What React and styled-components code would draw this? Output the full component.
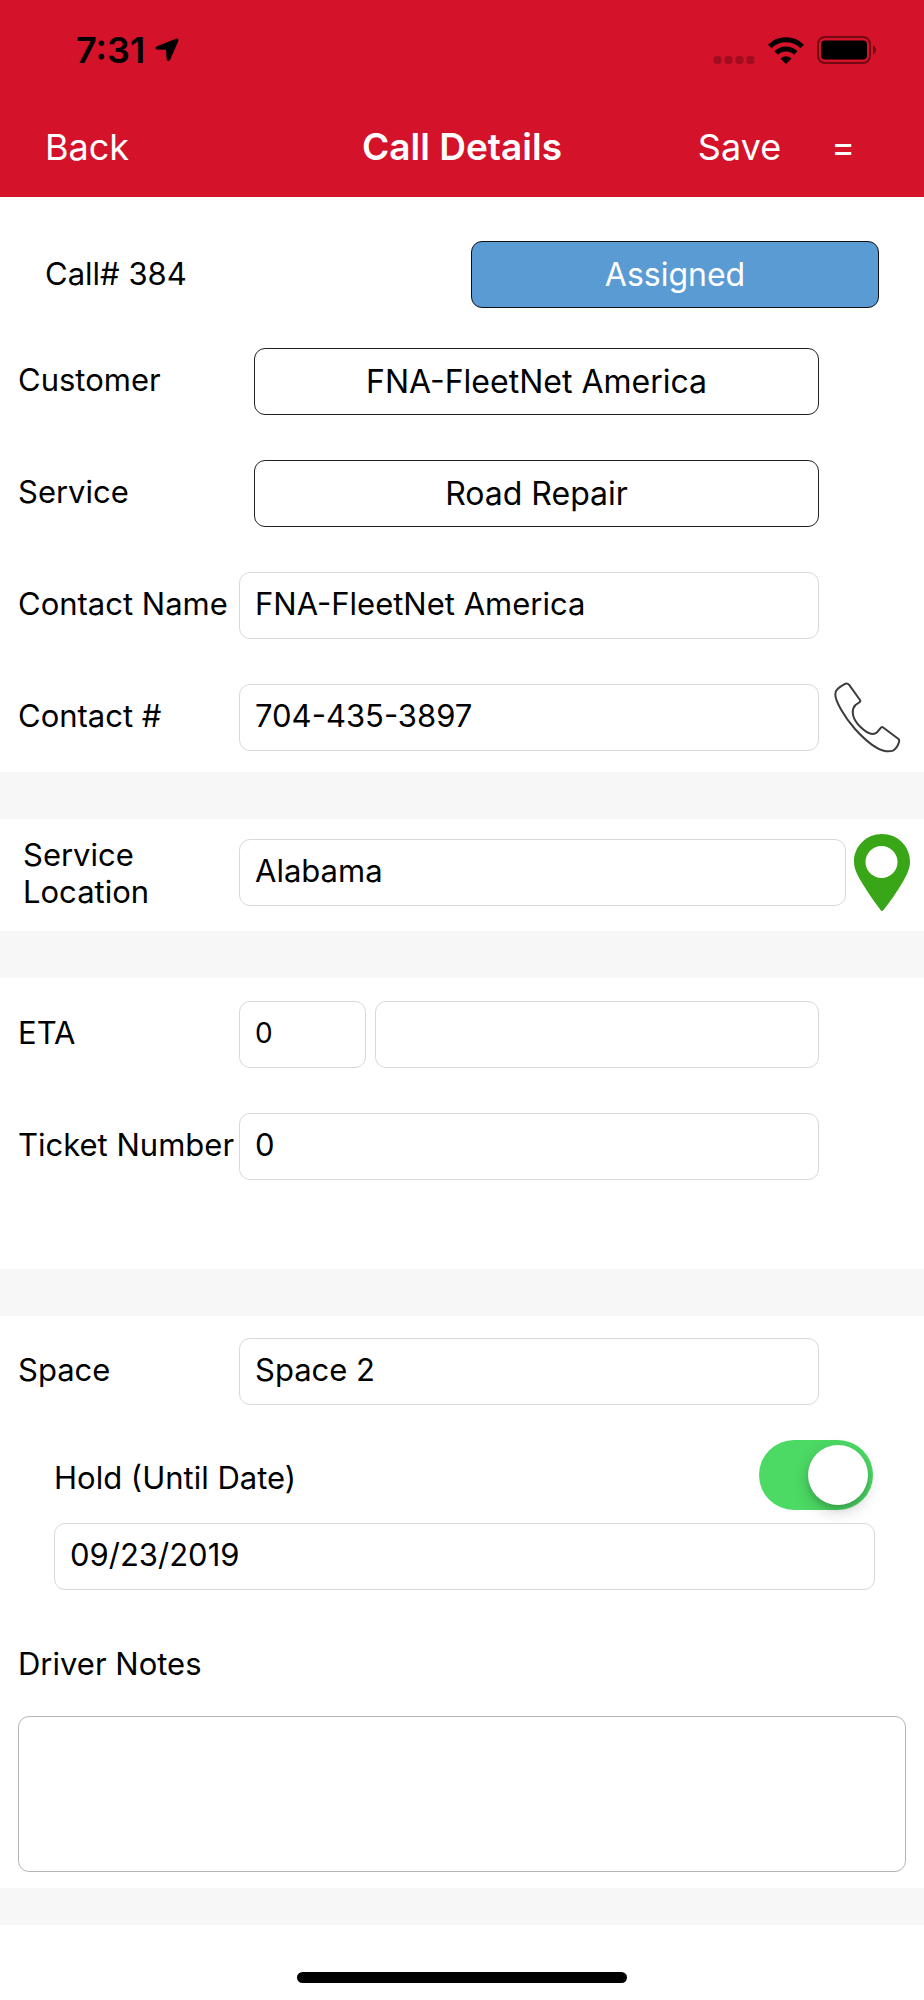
import React, { useState } from "react";
import styled, { createGlobalStyle } from "styled-components";

const GlobalStyle = createGlobalStyle`
  *, *::before, *::after { box-sizing: border-box; }
  body {
    margin: 0;
    background: #fff;
    color: #000;
    font-family: Inter, "Liberation Sans", sans-serif;
    font-size: 31px;
    line-height: 37px;
  }
  button, input, textarea { font: inherit; color: inherit; margin: 0; }
`;

const Screen = styled.div`
  min-height: 100vh;
  display: flex;
  flex-direction: column;
`;

const Header = styled.header`
  background: #d41229;
`;

const StatusBar = styled.div`
  display: flex;
  align-items: center;
  justify-content: space-between;
  height: 100px;
  padding: 0 47px 0 76px;
`;

const StatusGroup = styled.div`
  display: flex;
  align-items: center;
  gap: ${(p) => p.$gap}px;
`;

const Clock = styled.time`
  font-size: 36px;
  font-weight: 600;
`;

const NavBar = styled.nav`
  display: grid;
  grid-template-columns: 1fr auto 1fr;
  align-items: center;
  height: 97px;
  padding: 0 45px 4px;
  color: #fff;
`;

const Title = styled.h1`
  margin: 0;
  font-size: 37px;
  font-weight: 600;
  line-height: 44px;
`;

const NavActions = styled.div`
  display: flex;
  align-items: center;
  justify-content: flex-end;
  gap: 50px;
  padding-right: 24px;
`;

const NavButton = styled.button`
  justify-self: start;
  padding: 0;
  border: 0;
  background: none;
  font-size: 36px;
  line-height: 44px;
`;

const Section = styled.section`
  display: flex;
  flex-direction: column;
  gap: ${(p) => (p.$tight ? 35 : 45)}px;
  padding: ${(p) => p.$pad};
`;

const Band = styled.div`
  height: ${(p) => (p.$slim ? 37 : 47)}px;
  background: #f7f7f7;
`;

const Row = styled.div`
  display: grid;
  grid-template-columns: 221px 1fr ${(p) => (p.$wide ? 65 : 87)}px;
  grid-template-rows: 67px;
  align-items: center;
`;

const CallRow = styled.div`
  display: grid;
  grid-template-columns: 1fr 1fr;
  align-items: center;
  gap: 18px;
`;

const CallNumber = styled.h2`
  margin: 0;
  padding-bottom: 2px;
  font-size: 31px;
  font-weight: 400;
`;

const Label = styled.label`
  padding-bottom: 4px;
`;

const WrappedLabel = styled.label`
  max-width: 160px;
  padding-left: 5px;
`;

const HoldLabel = styled.label`
  padding-top: 4px;
`;

const PickerButton = styled.button`
  height: 67px;
  padding: 0 15px;
  border: 1px solid #222;
  border-radius: 11px;
  background: #fff;
  font-size: 32px;
`;

const FieldPicker = styled(PickerButton)`
  margin-left: 15px;
`;

const StatusButton = styled(PickerButton)`
  background: #5b9bd4;
  border-color: #111;
  color: #fff;
`;

const TextField = styled.input`
  width: 100%;
  min-width: 0;
  height: 67px;
  padding: 0 15px 4px;
  border: 1px solid #d9d9d9;
  border-radius: 11px;
  background: #fff;
  font-size: ${(p) => (p.$small ? 28 : 31)}px;
`;

const EtaFields = styled.div`
  display: grid;
  grid-template-columns: 127px 1fr;
  gap: 9px;
`;

const IconButton = styled.button`
  display: flex;
  justify-self: end;
  padding: 0 ${(p) => (p.$inset ? 5 : 0)}px 0 0;
  border: 0;
  background: none;
`;

const HoldGroup = styled.div`
  display: flex;
  flex-direction: column;
  gap: 13px;
  padding: 0 31px 0 36px;
`;

const HoldRow = styled.div`
  display: flex;
  align-items: center;
  justify-content: space-between;
  padding-right: 2px;
`;

const Switch = styled.input`
  appearance: none;
  display: flex;
  justify-content: ${(p) => (p.checked ? "flex-end" : "flex-start")};
  width: 114px;
  height: 70px;
  padding: 5px;
  border-radius: 35px;
  background: ${(p) => (p.checked ? "#4cd964" : "#e5e5ea")};

  &::before {
    content: "";
    width: 60px;
    height: 60px;
    border-radius: 50%;
    background: #fff;
    box-shadow: 0 6px 16px rgba(0, 0, 0, 0.2), 0 4px 4px rgba(0, 0, 0, 0.1);
  }
`;

const NotesGroup = styled.div`
  display: flex;
  flex-direction: column;
  gap: 30px;
  padding-top: 20px;
`;

const Notes = styled.textarea`
  display: block;
  width: 100%;
  height: 156px;
  padding: 15px;
  border: 1px solid #b5b5b5;
  border-radius: 11px;
  resize: none;
`;

const Footer = styled.footer`
  display: flex;
  justify-content: center;
  padding: 47px 0 18px;
`;

const HomeIndicator = styled.div`
  width: 330px;
  height: 11px;
  border-radius: 6px;
  background: #000;
`;

const LocationArrow = () => (
  <svg width="24" height="24" viewBox="0 0 24 24" aria-hidden="true">
    <path d="M21.5.5 1.5 8.500Q-.5 9.800 1.500 11.400L11 11.800 11.700 21.500Q13 24.300 15 22L23.400 2.700Q23.800.300 21.500.500Z" />
  </svg>
);

const SignalDots = () => (
  <svg width="42" height="28" viewBox="0 0 42 28" aria-hidden="true" fill="#000" fillOpacity=".24">
    {[0, 11, 22, 33].map((x) => (
      <rect key={x} x={x + 0.5} y="20" width="8" height="8" rx="3" />
    ))}
  </svg>
);

const Wifi = () => (
  <svg width="36" height="27" viewBox="0 0 36 27" aria-hidden="true">
    <g fill="none" stroke="#000" strokeWidth="5">
      <path d="M1.800 9.500A23 23 0 0 1 34.200 9.500" />
      <path d="M8.200 16A14 14 0 0 1 27.800 16" />
    </g>
    <path d="M12.500 21.500Q18 17 23.500 21.500L18.800 26.300Q18 27 17.200 26.300Z" />
  </svg>
);

const Battery = () => (
  <svg width="60" height="28" viewBox="0 0 60 28" aria-hidden="true">
    <rect x="1" y="1" width="52" height="26" rx="7" fill="none" stroke="#000" strokeOpacity=".45" strokeWidth="2" />
    <rect x="4" y="4.500" width="46" height="19" rx="4" />
    <path d="M56 9.500Q59 11 59 14T56 18.500Z" fillOpacity=".45" />
  </svg>
);

const Handset = () => (
  <svg width="67" height="71" viewBox="0 0 67 71" aria-hidden="true" fill="none" stroke="#3c3c3c" strokeWidth="2" strokeLinejoin="round">
    <path d="M3.500 7C6 4.500 9 3 11.500 1.600Q13.500 1 15 2.700L26 18Q26.800 19.300 25.500 20.200L21.500 23Q18.500 26 18.800 31C19 37 22 40.500 26 44.500C30 48.500 34 51.600 38 52Q42.500 52 44.500 48.500L47 45.600Q48 44.500 49.200 45.500L64.500 57Q65.600 58 65 60C64 64 61.500 67 59 68.600Q56.500 69.500 52 69.200C43 68 31 58 21 47C10 34.500 1.300 19 1.300 12.500Q1.400 9 3.500 7Z" />
  </svg>
);

const MapPin = () => (
  <svg width="58" height="79" viewBox="0 0 58 79" aria-hidden="true">
    <path
      fill="#38a616"
      fillRule="evenodd"
      d="M29 1C13.500 1 1 13 1 28.500C1 36 4.500 42 8.500 49C14 58.500 21 68 27.500 77Q29 79 30.500 77C37 69 44 58.500 49.500 49.500C53.500 42.500 57 36 57 28.500C57 13 44.500 1 29 1ZM28.500 13A16 16 0 1 1 28.500 45A16 16 0 1 1 28.500 13Z"
    />
  </svg>
);

export default function App() {
  const [hold, setHold] = useState(true);

  return (
    <>
      <GlobalStyle />
      <Screen>
        <Header>
          <StatusBar>
            <StatusGroup $gap={10}>
              <Clock>7:31</Clock>
              <LocationArrow />
            </StatusGroup>
            <StatusGroup $gap={13}>
              <SignalDots />
              <Wifi />
              <Battery />
            </StatusGroup>
          </StatusBar>
          <NavBar>
            <NavButton type="button">Back</NavButton>
            <Title>Call Details</Title>
            <NavActions>
              <NavButton type="button">Save</NavButton>
              <NavButton type="button" aria-label="Menu">=</NavButton>
            </NavActions>
          </NavBar>
        </Header>

        <main>
          <Section $pad="44px 45px 0">
            <CallRow>
              <CallNumber>Call# 384</CallNumber>
              <StatusButton type="button">Assigned</StatusButton>
            </CallRow>
          </Section>
          <Section $pad="40px 18px 21px">
            <Row>
              <Label htmlFor="customer">Customer</Label>
              <FieldPicker id="customer" type="button">FNA-FleetNet America</FieldPicker>
            </Row>
            <Row>
              <Label htmlFor="service">Service</Label>
              <FieldPicker id="service" type="button">Road Repair</FieldPicker>
            </Row>
            <Row>
              <Label htmlFor="contact-name">Contact Name</Label>
              <TextField id="contact-name" defaultValue="FNA-FleetNet America" />
            </Row>
            <Row>
              <Label htmlFor="contact-number">Contact #</Label>
              <TextField id="contact-number" type="tel" defaultValue="704-435-3897" />
              <IconButton type="button" $inset aria-label="Call contact">
                <Handset />
              </IconButton>
            </Row>
          </Section>

          <Band />
          <Section $pad="20px 13px 25px 18px">
            <Row $wide>
              <WrappedLabel htmlFor="location">Service Location</WrappedLabel>
              <TextField id="location" defaultValue="Alabama" />
              <IconButton type="button" aria-label="Show on map">
                <MapPin />
              </IconButton>
            </Row>
          </Section>

          <Band />
          <Section $pad="23px 18px 89px">
            <Row>
              <Label htmlFor="eta">ETA</Label>
              <EtaFields>
                <TextField id="eta" $small defaultValue="0" />
                <TextField aria-label="ETA time" />
              </EtaFields>
            </Row>
            <Row>
              <Label htmlFor="ticket">Ticket Number</Label>
              <TextField id="ticket" defaultValue="0" />
            </Row>
          </Section>

          <Band />
          <Section $tight $pad="22px 18px 16px">
            <Row>
              <Label htmlFor="space">Space</Label>
              <TextField id="space" defaultValue="Space 2" />
            </Row>
            <HoldGroup>
              <HoldRow>
                <HoldLabel htmlFor="hold">Hold (Until Date)</HoldLabel>
                <Switch
                  id="hold"
                  type="checkbox"
                  role="switch"
                  checked={hold}
                  onChange={(e) => setHold(e.target.checked)}
                />
              </HoldRow>
              <TextField aria-label="Hold until date" defaultValue="09/23/2019" />
            </HoldGroup>
            <NotesGroup>
              <Label htmlFor="notes">Driver Notes</Label>
              <Notes id="notes" />
            </NotesGroup>
          </Section>
          <Band $slim />
        </main>
        <Footer>
          <HomeIndicator />
        </Footer>
      </Screen>
    </>
  );
}
